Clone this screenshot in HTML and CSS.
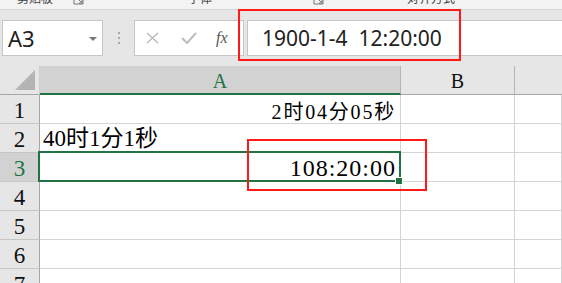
FILE: index.html
```html
<!DOCTYPE html>
<html lang="zh-CN">
<head>
    <meta charset="UTF-8">
    <title>Excel 时间</title>
    <link rel="stylesheet" href="styles.css">
</head>
<body>
    <!-- Ribbon-Unterkante (abgeschnitten) -->
    <div class="ribbon">
        <span class="group-label lbl-clip">剪贴板</span>
        <svg class="launcher l1" width="11" height="8" viewBox="0 0 11 8"><path d="M1 0 V6 H10 V0 M4 0 L9 5 M6 5 H9 V2" fill="none" stroke="#777" stroke-width="1"/></svg>
        <span class="group-label lbl-font">字体</span>
        <svg class="launcher l2" width="11" height="8" viewBox="0 0 11 8"><path d="M1 0 V6 H10 V0 M4 0 L9 5 M6 5 H9 V2" fill="none" stroke="#777" stroke-width="1"/></svg>
        <span class="group-label lbl-align">对齐方式</span>
    </div>

    <!-- Bearbeitungsleiste -->
    <div class="formula-bar">
        <div class="name-box">
            <span>A3</span>
            <span class="caret"></span>
        </div>
        <div class="dots"><i></i><i></i><i></i></div>
        <div class="fx-box">
            <svg width="13" height="12" viewBox="0 0 13 12"><path d="M1 1 L12 11 M12 1 L1 11" stroke="#bdbdbd" stroke-width="1.6" fill="none"/></svg>
            <svg width="16" height="12" viewBox="0 0 16 12"><path d="M1 6 L6 11 L15 1" stroke="#bdbdbd" stroke-width="2" fill="none"/></svg>
            <span class="fx">fx</span>
        </div>
        <div class="formula-input">1900-1-4&nbsp;&nbsp;12:20:00</div>
    </div>

    <!-- Tabellenblatt -->
    <div class="sheet">
        <div class="corner"><svg width="40" height="28" viewBox="0 0 40 28"><polygon points="35,4 35,24 15,24" fill="#b4b4b4"/></svg></div>
        <div class="col-head active">A</div>
        <div class="col-head">B</div>
        <div class="col-head last"></div>

        <div class="row-head">1</div>
        <div class="cell right r1">2时04分05秒</div>
        <div class="cell"></div>
        <div class="cell"></div>

        <div class="row-head">2</div>
        <div class="cell r2">40时1分1秒</div>
        <div class="cell"></div>
        <div class="cell"></div>

        <div class="row-head active">3</div>
        <div class="cell right r3">108:20:00</div>
        <div class="cell"></div>
        <div class="cell"></div>

        <div class="row-head">4</div>
        <div class="cell"></div>
        <div class="cell"></div>
        <div class="cell"></div>

        <div class="row-head">5</div>
        <div class="cell"></div>
        <div class="cell"></div>
        <div class="cell"></div>

        <div class="row-head">6</div>
        <div class="cell"></div>
        <div class="cell"></div>
        <div class="cell"></div>

        <div class="row-head">7</div>
        <div class="cell"></div>
        <div class="cell"></div>
        <div class="cell"></div>
    </div>

    <!-- Auswahlrahmen und rote Markierungen -->
    <div class="selection"></div>
    <div class="fill-handle"></div>
    <div class="mark mark-formula"></div>
    <div class="mark mark-cell"></div>
</body>
</html>
```

FILE: styles.css
```css
body {
    margin: 0;
    position: relative;
    height: 283px;
    overflow: hidden;
    background-color: #ffffff;
    font-family: "Noto Sans", "Noto Sans CJK SC", sans-serif;
}

/* Ribbon-Rest oben */
.ribbon {
    height: 9px;
    background-color: #f3f3f3;
    border-bottom: 1px solid #d5d5d5;
    display: flex;
    align-items: flex-start;
    overflow: hidden;
}

.group-label {
    font-family: "Noto Sans CJK SC", sans-serif;
    font-size: 12px;
    line-height: 12px;
    color: #444;
    margin-top: -8px;
}

.launcher {
    margin-top: -2px;
}

.lbl-clip { margin-left: 17px; }
.l1 { margin-left: 20px; }
.lbl-font { margin-left: 104px; }
.l2 { margin-left: 101px; }
.lbl-align { margin-left: 83px; }

/* Bearbeitungsleiste */
.formula-bar {
    display: flex;
    height: 36px;
    padding: 10px 0 10px 2px;
    background-color: #e6e6e6;
}

.name-box {
    box-sizing: border-box;
    width: 101px;
    height: 36px;
    background-color: #ffffff;
    border: 1px solid #c6c6c6;
    display: flex;
    align-items: center;
    justify-content: space-between;
    padding: 0 5px 0 5px;
    font-size: 22px;
    color: #222;
}

.caret {
    width: 0;
    height: 0;
    border-left: 4px solid transparent;
    border-right: 4px solid transparent;
    border-top: 4px solid #777;
    margin-top: 1px;
}

.dots {
    width: 31px;
    display: flex;
    flex-direction: column;
    align-items: center;
    justify-content: center;
    gap: 3px;
}

.dots i {
    display: block;
    width: 2px;
    height: 2px;
    background-color: #a8a8a8;
}

.fx-box {
    box-sizing: border-box;
    width: 110px;
    height: 36px;
    background-color: #ffffff;
    border: 1px solid #c6c6c6;
    display: flex;
    align-items: center;
    padding-left: 11px;
    gap: 21px;
}

.fx-box svg:nth-child(2) {
    margin-left: 1px;
}

.fx {
    font-family: "Liberation Serif", serif;
    font-style: italic;
    font-size: 16px;
    color: #555;
    margin-left: -2px;
}

.formula-input {
    flex: 1;
    box-sizing: border-box;
    height: 36px;
    margin-left: 3px;
    background-color: #ffffff;
    border: 1px solid #c6c6c6;
    border-right: none;
    display: flex;
    align-items: center;
    padding-left: 14px;
    font-size: 21px;
    color: #222;
}

/* Tabellenblatt */
.sheet {
    display: grid;
    grid-template-columns: 40px 361px 114px 1fr;
    grid-auto-rows: 29px;
    font-family: "Liberation Serif", "Noto Sans CJK SC", serif;
}

.corner {
    box-sizing: border-box;
    background-color: #e6e6e6;
    border-right: 1px solid #cfcfcf;
    border-bottom: 1px solid #a6a6a6;
}

.corner svg {
    display: block;
}

.col-head {
    box-sizing: border-box;
    background-color: #e6e6e6;
    border-right: 1px solid #b4b4b4;
    border-bottom: 1px solid #a6a6a6;
    display: flex;
    justify-content: center;
    align-items: flex-end;
    font-size: 20px;
    line-height: 20px;
    padding-bottom: 3px;
    color: #111;
}

.col-head.active {
    background-color: #d2d2d2;
    border-bottom: 2px solid #217346;
    color: #217346;
    padding-bottom: 2px;
}

.col-head.last {
    border-right: none;
}

.row-head {
    box-sizing: border-box;
    background-color: #e6e6e6;
    border-right: 1px solid #a6a6a6;
    border-bottom: 1px solid #c6c6c6;
    display: flex;
    justify-content: center;
    align-items: flex-end;
    font-size: 23px;
    line-height: 23px;
    padding-bottom: 1px;
    color: #111;
}

.row-head.active {
    background-color: #d2d2d2;
    color: #217346;
}

.cell {
    box-sizing: border-box;
    border-right: 1px solid #d4d4d4;
    border-bottom: 1px solid #d4d4d4;
    display: flex;
    align-items: flex-end;
    color: #000;
    white-space: nowrap;
}

.cell.right {
    justify-content: flex-end;
}

.r1 {
    font-size: 20px;
    line-height: 20px;
    letter-spacing: 1.8px;
    padding: 0 4px 1px 0;
}

.r2 {
    font-size: 23px;
    line-height: 23px;
    padding: 0 0 2px 3px;
}

.r3 {
    font-size: 24px;
    line-height: 24px;
    letter-spacing: 1px;
    padding: 0 4px 1px 0;
}

/* Auswahl A3 */
.selection {
    position: absolute;
    left: 38px;
    top: 151px;
    width: 363px;
    height: 31px;
    box-sizing: border-box;
    border: 2px solid #217346;
}

.fill-handle {
    position: absolute;
    left: 395px;
    top: 177px;
    width: 6px;
    height: 6px;
    background-color: #217346;
    border: 1px solid #ffffff;
}

/* Rote Markierungsrahmen */
.mark {
    position: absolute;
    box-sizing: border-box;
    border: 2px solid #ff1a1a;
}

.mark-formula {
    left: 238px;
    top: 9px;
    width: 223px;
    height: 52px;
}

.mark-cell {
    left: 247px;
    top: 139px;
    width: 180px;
    height: 52px;
}
```
